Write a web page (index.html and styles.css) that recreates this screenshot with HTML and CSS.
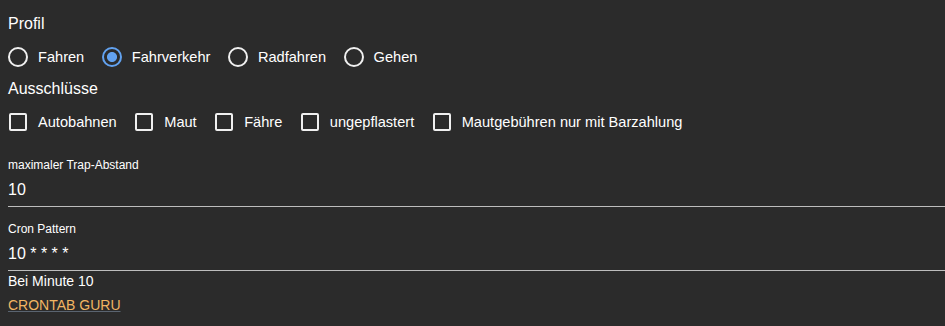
FILE: index.html
```html
<!DOCTYPE html>
<html lang="de">
<head>
  <meta charset="UTF-8" />
  <meta name="viewport" content="width=device-width, initial-scale=1.0"/>
  <title>Routing Einstellungen</title>
  <link rel="stylesheet" href="styles.css">
</head>
<body>
  <div class="settings">
    <div class="group-title">Profil</div>
    <div class="choices">
      <label class="choice"><input type="radio" name="profile" value="car">Fahren</label>
      <label class="choice"><input type="radio" name="profile" value="traffic" checked>Fahrverkehr</label>
      <label class="choice"><input type="radio" name="profile" value="bike">Radfahren</label>
      <label class="choice"><input type="radio" name="profile" value="walk">Gehen</label>
    </div>

    <div class="group-title title-gap">Ausschlüsse</div>
    <div class="choices">
      <label class="choice"><input type="checkbox" name="motorway">Autobahnen</label>
      <label class="choice"><input type="checkbox" name="toll">Maut</label>
      <label class="choice"><input type="checkbox" name="ferry">Fähre</label>
      <label class="choice"><input type="checkbox" name="unpaved">ungepflastert</label>
      <label class="choice"><input type="checkbox" name="cash">Mautgebühren nur mit Barzahlung</label>
    </div>

    <div class="field field-first">
      <label class="field-label" for="trap">maximaler Trap-Abstand</label>
      <input class="field-input" id="trap" type="text" value="10">
    </div>

    <div class="field field-next">
      <label class="field-label" for="cron">Cron Pattern</label>
      <input class="field-input" id="cron" type="text" value="10 * * * *">
    </div>
    <div class="hint">Bei Minute 10</div>
    <a class="link" href="#">CRONTAB GURU</a>
  </div>
</body>
</html>
```

FILE: styles.css
```css
body {
  margin: 0;
  background: #2b2b2b;
  color: #fff;
  font-family: 'Liberation Sans', Arial, sans-serif;
}
.settings {
  padding: 12px 0 0 8px;
}
.group-title {
  font-size: 16px;
  line-height: 24px;
}
.title-gap {
  margin-top: 6px;
}
.choices {
  display: flex;
  align-items: center;
  height: 28px;
  margin-top: 7px;
}
.choice {
  display: flex;
  align-items: center;
  gap: 10px;
  margin-right: 17.5px;
  font-size: 14.6px;
  line-height: 20px;
  cursor: pointer;
}
.choice input {
  appearance: none;
  margin: 0;
  flex: none;
  box-sizing: border-box;
  cursor: pointer;
}
.choice input[type="radio"] {
  width: 20px;
  height: 20px;
  border: 2px solid #f0f0f0;
  border-radius: 50%;
}
.choice input[type="radio"]:checked {
  border-color: #62a2f0;
  background: radial-gradient(circle at center, #62a2f0 0 4.6px, transparent 5.4px);
}
.choice input[type="checkbox"] {
  width: 18px;
  height: 18px;
  margin: 1px;
  border: 2px solid #f0f0f0;
  border-radius: 2px;
}
.field {
  border-bottom: 1px solid #bdbdbd;
  padding-bottom: 4px;
}
.field-first {
  margin-top: 21px;
}
.field-next {
  margin-top: 14px;
}
.field-label {
  display: block;
  font-size: 12px;
  line-height: 16px;
}
.field-input {
  display: block;
  width: 100%;
  margin: 5px 0 0;
  padding: 0;
  border: none;
  outline: none;
  background: transparent;
  color: #fff;
  font-family: inherit;
  font-size: 16px;
  line-height: 24px;
  height: 24px;
}
.hint {
  font-size: 14px;
  line-height: 20px;
}
.link {
  display: inline-block;
  margin-top: 4px;
  font-size: 14px;
  line-height: 20px;
  color: #f1b563;
  text-decoration-color: #5a6470;
}
```
